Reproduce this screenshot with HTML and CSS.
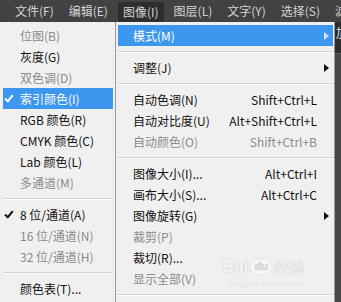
FILE: index.html
```html
<!DOCTYPE html>
<html lang="zh-CN">
<head>
<meta charset="utf-8">
<title>图像菜单</title>
<link rel="stylesheet" href="styles.css">
</head>
<body>
<div class="screen">
  <div class="menubar">
    <span class="mb-item">文件(F)</span>
    <span class="mb-item">编辑(E)</span>
    <span class="mb-item mb-open">图像(I)</span>
    <span class="mb-item">图层(L)</span>
    <span class="mb-item">文字(Y)</span>
    <span class="mb-item">选择(S)</span>
    <span class="mb-item">滤</span>
  </div>
  <div class="below">
    <div class="submenu">
      <div class="srow dis"><span class="chk"></span>位图(B)</div>
      <div class="srow"><span class="chk"></span>灰度(G)</div>
      <div class="srow dis"><span class="chk"></span>双色调(D)</div>
      <div class="srow hl"><span class="chk"><svg width="10" height="9" viewBox="0 0 10 9"><path d="M1 4.5 L3.8 7.2 L8.8 1.2" fill="none" stroke="currentColor" stroke-width="2"/></svg></span>索引颜色(I)</div>
      <div class="srow"><span class="chk"></span>RGB 颜色(R)</div>
      <div class="srow"><span class="chk"></span>CMYK 颜色(C)</div>
      <div class="srow"><span class="chk"></span>Lab 颜色(L)</div>
      <div class="srow dis"><span class="chk"></span>多通道(M)</div>
      <div class="sep"></div>
      <div class="srow"><span class="chk"><svg width="10" height="9" viewBox="0 0 10 9"><path d="M1 4.5 L3.8 7.2 L8.8 1.2" fill="none" stroke="currentColor" stroke-width="2"/></svg></span>8 位/通道(A)</div>
      <div class="srow dis"><span class="chk"></span>16 位/通道(N)</div>
      <div class="srow dis"><span class="chk"></span>32 位/通道(H)</div>
      <div class="sep"></div>
      <div class="srow"><span class="chk"></span>颜色表(T)...</div>
    </div>
    <div class="menu">
      <div class="row hl"><span class="label">模式(M)</span><svg class="arrow" width="5" height="8" viewBox="0 0 5 8"><path d="M0 0 L5 4 L0 8 Z" fill="currentColor"/></svg></div>
      <div class="sep"></div>
      <div class="row"><span class="label">调整(J)</span><svg class="arrow" width="5" height="8" viewBox="0 0 5 8"><path d="M0 0 L5 4 L0 8 Z" fill="currentColor"/></svg></div>
      <div class="sep"></div>
      <div class="row"><span class="label">自动色调(N)</span><span class="key">Shift+Ctrl+L</span></div>
      <div class="row"><span class="label">自动对比度(U)</span><span class="key">Alt+Shift+Ctrl+L</span></div>
      <div class="row dis"><span class="label">自动颜色(O)</span><span class="key">Shift+Ctrl+B</span></div>
      <div class="sep"></div>
      <div class="row"><span class="label">图像大小(I)...</span><span class="key">Alt+Ctrl+I</span></div>
      <div class="row"><span class="label">画布大小(S)...</span><span class="key">Alt+Ctrl+C</span></div>
      <div class="row"><span class="label">图像旋转(G)</span><svg class="arrow" width="5" height="8" viewBox="0 0 5 8"><path d="M0 0 L5 4 L0 8 Z" fill="currentColor"/></svg></div>
      <div class="row dis"><span class="label">裁剪(P)</span></div>
      <div class="row"><span class="label">裁切(R)...</span></div>
      <div class="row dis"><span class="label">显示全部(V)</span></div>
      <div class="sep"></div>
    </div>
    <div class="side">
      <div class="side-top">加</div>
      <div class="side-bottom"></div>
    </div>
  </div>
  <div class="watermark">
    <div class="wm-line"><span class="wm-bai">Bai</span><span class="wm-du">du</span><span class="wm-cn">经验</span></div>
    <div class="wm-url">jingyan.baidu.com</div>
  </div>
</div>
</body>
</html>
```

FILE: styles.css
```css
html, body {
  margin: 0;
  padding: 0;
}
body {
  background: #444;
  font-family: "Noto Sans CJK SC", "Noto Sans", sans-serif;
  font-size: 12px;
}
.screen {
  position: relative;
  width: 341px;
  height: 302px;
  overflow: hidden;
  background: #444;
}
.menubar {
  height: 22px;
  display: flex;
  align-items: stretch;
  gap: 5px;
  padding-left: 10px;
  background: #424242;
  color: #d4d4d4;
  white-space: nowrap;
}
.mb-item {
  display: flex;
  align-items: center;
  padding: 0 5px;
  line-height: 1;
}
.mb-open {
  background: #2e2e2e;
  margin-top: 2px;
}
.below {
  display: flex;
  height: 280px;
}
.submenu {
  width: 110px;
  padding: 3px 2px 0 3px;
  background: #f0f0f0;
  flex-shrink: 0;
}
.srow {
  height: 21px;
  display: flex;
  align-items: center;
  color: #111;
  white-space: nowrap;
  line-height: 1;
}
.chk {
  width: 17px;
  display: flex;
  align-items: center;
  padding-left: 1px;
  box-sizing: border-box;
}
.dis {
  color: #8b8b8b;
}
.hl {
  background: #3d97ee;
  color: #fff;
}
.sep {
  height: 11px;
  display: flex;
  flex-direction: column;
  justify-content: center;
}
.sep::before {
  content: "";
  display: block;
  height: 1px;
  background: #d3d3d3;
  border-bottom: 1px solid #fbfbfb;
}
.menu {
  width: 218px;
  border-left: 1px solid #9a9a9a;
  border-right: 1px solid #9a9a9a;
  background: #f0f0f0;
  padding-top: 3px;
  flex-shrink: 0;
}
.menu .sep {
  margin-left: 1px;
}
.row {
  height: 21px;
  margin: 0 1px 0 2px;
  padding: 0 4px 0 15px;
  display: flex;
  align-items: center;
  color: #111;
  white-space: nowrap;
  line-height: 1;
}
.row.dis {
  color: #8b8b8b;
}
.row.hl {
  color: #fff;
}
.label {
  flex: 1;
}
.key {
  margin-right: 12px;
}
.arrow {
  color: #111;
}
.row.hl .arrow {
  color: #cfe4fb;
}
.side {
  flex: 1;
  display: flex;
  flex-direction: column;
}
.side-top {
  height: 31px;
  background: #2d2d2d;
  color: #e6e6e6;
  padding-left: 1px;
  padding-top: 2px;
  box-sizing: border-box;
  white-space: nowrap;
  overflow: hidden;
  font-size: 12px;
}
.side-bottom {
  flex: 1;
  background: #474747;
  border-top: 1px solid #5a5a5a;
}
.watermark {
  position: absolute;
  left: 222px;
  top: 258px;
  color: #f7f7f7;
  text-shadow: 0 0 1px #bdbdbd, 0 0 1px #bdbdbd;
  opacity: 0.85;
  pointer-events: none;
}
.wm-line {
  display: flex;
  align-items: center;
  gap: 2px;
  font-family: "Liberation Sans", sans-serif;
  font-size: 17px;
  font-weight: bold;
  line-height: 1;
}
.wm-du {
  font-size: 11px;
  width: 22px;
  height: 14px;
  border-radius: 7px;
  background: #f9f9f9;
  color: #ddd;
  display: flex;
  align-items: center;
  justify-content: center;
  box-shadow: 0 0 1px #bbb;
}
.wm-cn {
  font-family: "Noto Sans CJK SC", sans-serif;
  font-size: 15px;
  font-weight: normal;
}
.wm-url {
  font-family: "Liberation Serif", serif;
  font-size: 9px;
  margin-top: 3px;
  padding-left: 8px;
  letter-spacing: 0.3px;
  color: #f2f2f2;
  text-shadow: 0 0 1px #d0d0d0;
}
```
